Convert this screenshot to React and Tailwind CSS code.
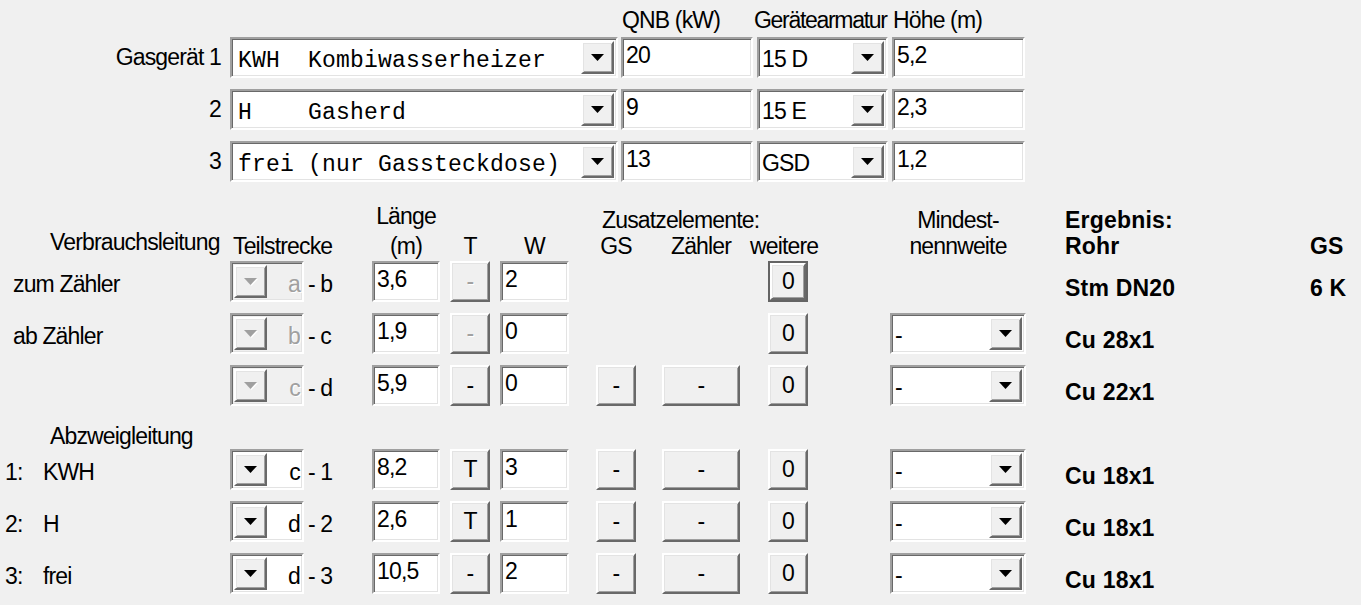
import React from 'react';

const sunken =
  'border-2 border-t-[#a0a0a0] border-l-[#a0a0a0] border-r-white border-b-white shadow-[inset_1px_1px_0_#696969,inset_-1px_-1px_0_#e3e3e3]';
const raised =
  'border-2 border-t-white border-l-white border-r-[#696969] border-b-[#696969] shadow-[inset_1px_1px_0_#e3e3e3,inset_-1px_-1px_0_#a0a0a0] bg-[#f0f0f0]';
const greyText = 'text-[#a0a0a0] [text-shadow:1px_1px_0_#ffffff]';

function Arrow({ disabled }) {
  return (
    <svg width="14" height="8" viewBox="0 0 14 8">
      {disabled && <polygon points="1,1 14,1 7.5,8" fill="#ffffff" />}
      <polygon points="0,0 13,0 6.5,7" fill={disabled ? '#a0a0a0' : '#000000'} />
    </svg>
  );
}

function DropBtn({ disabled }) {
  return (
    <div className={`${raised} w-[33px] h-full shrink-0 flex items-center justify-center`}>
      <Arrow disabled={disabled} />
    </div>
  );
}

function TextBox({ w, value }) {
  return (
    <div className={`${sunken} ${w} h-[41px] shrink-0 bg-white pl-[3px] pt-[3px] leading-[26px]`}>
      {value}
    </div>
  );
}

function Combo({ w, text, mono }) {
  return (
    <div className={`${sunken} ${w} h-[41px] shrink-0 bg-white p-[2px] flex`}>
      {mono ? (
        <div className="flex-1 pl-[4px] pt-[7px] leading-[26px] whitespace-pre font-['Liberation_Mono','Courier_New',monospace] text-[23px] tracking-[0.2px]">
          {text}
        </div>
      ) : (
        <div className="flex-1 pl-[1px] pt-[5px] leading-[26px] whitespace-pre">{text}</div>
      )}
      <DropBtn />
    </div>
  );
}

function SegCombo({ letter, disabled }) {
  return (
    <div
      className={`${sunken} w-[74px] h-[41px] shrink-0 p-[2px] flex ${disabled ? 'bg-[#f0f0f0]' : 'bg-white'}`}
    >
      <DropBtn disabled={disabled} />
      <div className={`flex-1 text-right pt-[6px] leading-[26px] ${disabled ? greyText : ''}`}>{letter}</div>
    </div>
  );
}

function Btn({ w, label, disabled, isDefault }) {
  const inner = (
    <div className={`${raised} ${isDefault ? 'w-full h-full' : `${w} h-[41px]`} shrink-0 flex items-center justify-center leading-none`}>
      <span className={disabled ? greyText : ''}>{label}</span>
    </div>
  );
  if (isDefault) {
    return <div className={`${w} h-[41px] shrink-0 border-2 border-[#646464]`}>{inner}</div>;
  }
  return inner;
}

const gasRows = [
  { label: 'Gasgerät 1', device: 'KWH  Kombiwasserheizer', qnb: '20', armatur: '15 D', hoehe: '5,2' },
  { label: '2', device: 'H    Gasherd', qnb: '9', armatur: '15 E', hoehe: '2,3' },
  { label: '3', device: 'frei (nur Gassteckdose)', qnb: '13', armatur: 'GSD', hoehe: '1,2' },
];

const mainRows = [
  { label: 'zum Zähler', from: 'a', to: 'b', len: '3,6', t: '-', tOff: true, w: '2', extras: false, def: true, mindest: false, result: 'Stm DN20', gs: '6 K', segOff: true },
  { label: 'ab Zähler', from: 'b', to: 'c', len: '1,9', t: '-', tOff: true, w: '0', extras: false, mindest: true, result: 'Cu 28x1', segOff: true },
  { label: '', from: 'c', to: 'd', len: '5,9', t: '-', w: '0', extras: true, mindest: true, result: 'Cu 22x1', segOff: true },
];

const branchRows = [
  { num: '1:', name: 'KWH', from: 'c', to: '1', len: '8,2', t: 'T', w: '3', extras: true, mindest: true, result: 'Cu 18x1' },
  { num: '2:', name: 'H', from: 'd', to: '2', len: '2,6', t: 'T', w: '1', extras: true, mindest: true, result: 'Cu 18x1' },
  { num: '3:', name: 'frei', from: 'd', to: '3', len: '10,5', t: '-', w: '2', extras: true, mindest: true, result: 'Cu 18x1' },
];

function PipeRow({ row, label }) {
  return (
    <div className="flex h-[41px]">
      <div className="w-[230px] shrink-0 pt-[10px] leading-[26px] whitespace-pre">{label}</div>
      <SegCombo letter={row.from} disabled={row.segOff} />
      <div className="w-[68px] shrink-0 pl-[4px] pt-[10px] leading-[26px]">- {row.to}</div>
      <TextBox w="w-[68px]" value={row.len} />
      <div className="ml-[10px]">
        <Btn w="w-[40px]" label={row.t} disabled={row.tOff} />
      </div>
      <div className="ml-[10px]">
        <TextBox w="w-[69px]" value={row.w} />
      </div>
      <div className="ml-[27px] w-[40px] shrink-0">{row.extras && <Btn w="w-[40px]" label="-" />}</div>
      <div className="ml-[26px] w-[78px] shrink-0">{row.extras && <Btn w="w-[78px]" label="-" />}</div>
      <div className="ml-[28px]">
        <Btn w="w-[40px]" label="0" isDefault={row.def} />
      </div>
      <div className="ml-[82px] w-[136px] shrink-0">{row.mindest && <Combo w="w-[136px]" text="-" />}</div>
      <div className="ml-[39px] w-[245px] shrink-0 pt-[14px] leading-[26px] font-bold text-[23px] tracking-[0.2px]">
        {row.result}
      </div>
      <div className="pt-[14px] leading-[26px] font-bold text-[23px] tracking-[0.2px]">{row.gs}</div>
    </div>
  );
}

export default function App() {
  return (
    <div className="min-h-screen w-[1361px] bg-[#f0f0f0] text-black font-['Liberation_Sans',Arial,sans-serif] text-[23px] tracking-[-0.85px] pt-[7px]">
      {/* Gasgeräte */}
      <div className="flex h-[26px] leading-[26px]">
        <div className="w-[622px] shrink-0" />
        <div className="w-[132px] shrink-0">QNB (kW)</div>
        <div className="w-[139px] shrink-0 tracking-[-1.3px]">Gerätearmatur</div>
        <div>Höhe (m)</div>
      </div>
      <div className="mt-[4px] flex flex-col gap-[11px]">
        {gasRows.map((r) => (
          <div key={r.label} className="flex h-[41px]">
            <div className="w-[230px] shrink-0 text-right pr-[9px] pt-[7px] leading-[26px]">{r.label}</div>
            <Combo w="w-[388px]" text={r.device} mono />
            <div className="ml-[3px]">
              <TextBox w="w-[132px]" value={r.qnb} />
            </div>
            <div className="ml-[4px]">
              <Combo w="w-[131px]" text={r.armatur} />
            </div>
            <div className="ml-[4px]">
              <TextBox w="w-[133px]" value={r.hoehe} />
            </div>
          </div>
        ))}
      </div>

      {/* Kopfzeile Leitungen */}
      <div className="mt-[25px] flex h-[52px] leading-[26px]">
        <div className="w-[230px] shrink-0 flex flex-col">
          <div className="h-[26px]" />
          <div className="h-[26px] pl-[50px] leading-[18px]">Verbrauchsleitung</div>
        </div>
        <div className="w-[142px] shrink-0 flex flex-col">
          <div className="h-[26px]" />
          <div className="h-[26px] pl-[3px]">Teilstrecke</div>
        </div>
        <div className="w-[68px] shrink-0 flex flex-col text-center">
          <div className="h-[26px] leading-[18px]">Länge</div>
          <div className="h-[26px]">(m)</div>
        </div>
        <div className="ml-[10px] w-[40px] shrink-0 flex flex-col text-center">
          <div className="h-[26px]" />
          <div className="h-[26px]">T</div>
        </div>
        <div className="ml-[10px] w-[69px] shrink-0 flex flex-col text-center">
          <div className="h-[26px]" />
          <div className="h-[26px]">W</div>
        </div>
        <div className="ml-[27px] w-[40px] shrink-0 flex flex-col">
          <div className="h-[26px] pl-[6px] whitespace-nowrap">Zusatzelemente:</div>
          <div className="h-[26px] text-center">GS</div>
        </div>
        <div className="ml-[26px] w-[78px] shrink-0 flex flex-col text-center">
          <div className="h-[26px]" />
          <div className="h-[26px]">Zähler</div>
        </div>
        <div className="ml-[28px] w-[40px] shrink-0 flex flex-col">
          <div className="h-[26px]" />
          <div className="h-[26px] -ml-[18px] whitespace-nowrap">weitere</div>
        </div>
        <div className="ml-[82px] w-[136px] shrink-0 flex flex-col text-center">
          <div className="h-[26px]">Mindest-</div>
          <div className="h-[26px]">nennweite</div>
        </div>
        <div className="ml-[39px] w-[245px] shrink-0 flex flex-col font-bold text-[23px] tracking-[0.2px]">
          <div className="h-[26px]">Ergebnis:</div>
          <div className="h-[26px]">Rohr</div>
        </div>
        <div className="flex flex-col font-bold text-[23px] tracking-[0.2px]">
          <div className="h-[26px]" />
          <div className="h-[26px]">GS</div>
        </div>
      </div>

      {/* Verbrauchsleitung */}
      <div className="mt-[2px] flex flex-col gap-[11px]">
        {mainRows.map((r, i) => (
          <PipeRow key={i} row={r} label={r.label ? <span className="pl-[13px]">{r.label}</span> : ''} />
        ))}
      </div>

      {/* Abzweigleitung */}
      <div className="mt-[18px] h-[25px] leading-[25px] pl-[50px]">Abzweigleitung</div>
      <div className="flex flex-col gap-[11px]">
        {branchRows.map((r, i) => (
          <PipeRow
            key={i}
            row={r}
            label={
              <span className="pl-[5px] flex">
                <span className="w-[38px]">{r.num}</span>
                <span>{r.name}</span>
              </span>
            }
          />
        ))}
      </div>
    </div>
  );
}
